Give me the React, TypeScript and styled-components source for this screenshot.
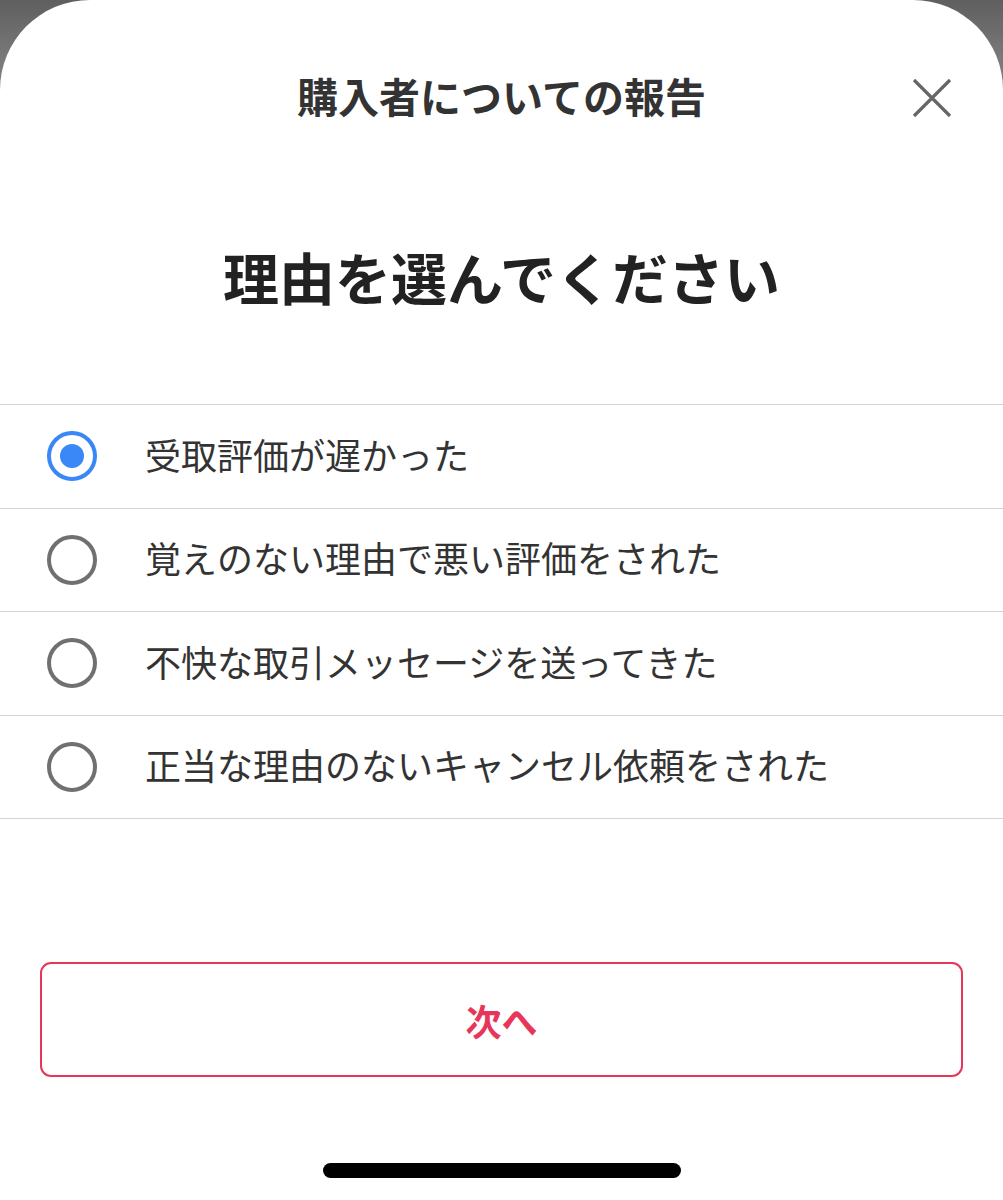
import React, { useState } from "react";
import styled, { createGlobalStyle } from "styled-components";

const Global = createGlobalStyle`
  html, body { margin: 0; padding: 0; }
  body {
    background: linear-gradient(180deg, #5f5f5f 0px, #7a7a7a 60px, #8a8a8a 120px);
    font-family: "Noto Sans CJK JP", "Noto Sans", sans-serif;
    -webkit-font-smoothing: antialiased;
  }
`;

const Sheet = styled.div`
  width: 1003px;
  height: 1200px;
  background: #fff;
  border-radius: 90px 90px 0 0;
  display: flex;
  flex-direction: column;
  overflow: hidden;
`;

const Header = styled.header`
  height: 196px;
  position: relative;
  display: flex;
  align-items: center;
  justify-content: center;
`;

const Title = styled.h1`
  margin: 0;
  padding-bottom: 6px;
  font-size: 41px;
  line-height: 1;
  font-weight: 700;
  color: #333;
  letter-spacing: 0;
`;

const CloseButton = styled.button`
  position: absolute;
  right: 49px;
  top: 76px;
  width: 44px;
  height: 44px;
  padding: 0;
  border: none;
  background: none;
  display: flex;
  align-items: center;
  justify-content: center;
`;

const Heading = styled.h2`
  margin: 0;
  padding: 50px 0 98px;
  font-size: 56px;
  line-height: 60px;
  font-weight: 700;
  color: #222;
  text-align: center;
`;

const List = styled.div`
  display: flex;
  flex-direction: column;
  border-bottom: 1.5px solid #d4d4d4;
`;

const Row = styled.label`
  height: 102.5px;
  border-top: 1.5px solid #d4d4d4;
  display: flex;
  align-items: center;
  padding-left: 47px;
  gap: 48px;
  cursor: pointer;
`;

const Radio = styled.span<{ $checked: boolean }>`
  box-sizing: border-box;
  width: 50px;
  height: 50px;
  flex: none;
  border-radius: 50%;
  border: 4px solid ${(p) => (p.$checked ? "#3a87f7" : "#707070")};
  display: flex;
  align-items: center;
  justify-content: center;
  &::after {
    content: "";
    width: 24px;
    height: 24px;
    border-radius: 50%;
    background: #3a87f7;
    display: ${(p) => (p.$checked ? "block" : "none")};
  }
`;

const RowText = styled.span`
  font-size: 36px;
  line-height: 1;
  padding-bottom: 5px;
  color: #333;
  font-weight: 400;
`;

const Footer = styled.div`
  margin-top: 143px;
  padding: 0 40px;
  display: flex;
  flex-direction: column;
  align-items: center;
`;

const NextButton = styled.button`
  box-sizing: border-box;
  width: 923px;
  height: 115px;
  border: 2.5px solid #e8355a;
  border-radius: 11px;
  background: #fff;
  color: #e8355a;
  font-family: "Noto Sans CJK JP", "Noto Sans", sans-serif;
  font-size: 36px;
  font-weight: 700;
  display: flex;
  align-items: center;
  justify-content: center;
`;

const HomeIndicator = styled.div`
  margin-top: 86px;
  width: 358px;
  height: 15px;
  border-radius: 8px;
  background: #000;
`;

const options = [
  "受取評価が遅かった",
  "覚えのない理由で悪い評価をされた",
  "不快な取引メッセージを送ってきた",
  "正当な理由のないキャンセル依頼をされた",
];

export default function App() {
  const [selected, setSelected] = useState(0);
  return (
    <>
      <Global />
      <Sheet>
        <Header>
          <Title>購入者についての報告</Title>
          <CloseButton aria-label="閉じる">
            <svg width="40" height="40" viewBox="0 0 40 40">
              <path d="M2 2 L38 38 M38 2 L2 38" stroke="#666" strokeWidth="3.2" strokeLinecap="butt" />
            </svg>
          </CloseButton>
        </Header>
        <Heading>理由を選んでください</Heading>
        <List>
          {options.map((o, i) => (
            <Row key={o} onClick={() => setSelected(i)}>
              <Radio $checked={selected === i} />
              <RowText>{o}</RowText>
            </Row>
          ))}
        </List>
        <Footer>
          <NextButton>次へ</NextButton>
          <HomeIndicator />
        </Footer>
      </Sheet>
    </>
  );
}
